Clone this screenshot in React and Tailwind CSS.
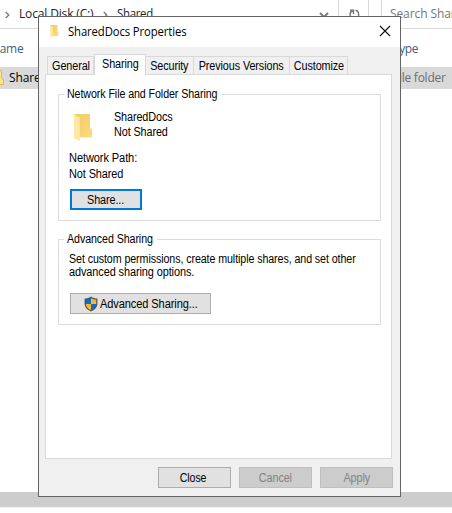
import React from "react";

const UI = "font-['Liberation_Sans',Arial,sans-serif] text-[12px] leading-[16px] whitespace-nowrap text-black";
const SEGOE = "font-['Open_Sans','Noto_Sans',sans-serif] text-[12px] leading-[16px] whitespace-nowrap";
const NARROW = "inline-block origin-left scale-x-[0.9] tracking-[-0.1px]";
const NARROWER = "inline-block origin-left scale-x-[0.89] tracking-[-0.1px]";
const NARROW_CENTER = "inline-block origin-center scale-x-[0.9] tracking-[-0.1px]";

function Chevron({ className }) {
  return (
    <svg className={className} width="5" height="8" viewBox="0 0 5 8" fill="none" stroke="#777" strokeWidth="1.3">
      <path d="M.8 1l3 3-3 3" />
    </svg>
  );
}

function Folder({ width, height }) {
  return (
    <svg width={width} height={height} viewBox="0 0 19 28" className="shrink-0">
      <defs>
        <linearGradient id="folder-back" x1="0" x2="1" y1="0" y2="1">
          <stop offset="0" stopColor="#efcb62" />
          <stop offset="1" stopColor="#fbdc82" />
        </linearGradient>
      </defs>
      <path d="M0 0H16V14.500H18V23.500H5Z" fill="url(#folder-back)" />
      <path d="M0 0L5.800 4V27L0 24.500Z" fill="#ffe8a2" />
    </svg>
  );
}

function Shield() {
  return (
    <svg width="14" height="16" viewBox="0 0 14 16" className="shrink-0">
      <path d="M7 .5C5.200 2 3 2.600 .6 2.600V7.500C.6 11.200 3.200 13.900 7 15.500c3.800-1.600 6.400-4.300 6.400-8V2.600C11 2.600 8.800 2 7 .5Z" fill="#505050" />
      <path d="M7 2C5.500 3 3.700 3.600 1.800 3.700V8H7Z" fill="#0870d0" />
      <path d="M7 2c1.500 1 3.300 1.600 5.200 1.700V8H7Z" fill="#fdb52b" />
      <path d="M1.800 8C2 10.900 4 12.900 7 14.300V8Z" fill="#fdb52b" />
      <path d="M12.200 8C12 10.900 10 12.900 7 14.300V8Z" fill="#0870d0" />
    </svg>
  );
}

function Tab({ className, children }) {
  return (
    <div className={`${UI} flex h-[18px] justify-center border-t border-r border-[#d9d9d9] bg-[#f0f0f0] pt-px ${className}`}>
      <span className={NARROW_CENTER}>{children}</span>
    </div>
  );
}

function Group({ title, titleClass, className, children }) {
  return (
    <fieldset className={`ml-3 w-[323px] min-w-0 border border-[#dcdcdc] ${className}`}>
      <legend className={`${UI} ml-[5px] h-4 pl-[3px] ${titleClass}`}>
        <span className={NARROWER}>{title}</span>
      </legend>
      {children}
    </fieldset>
  );
}

function Explorer() {
  return (
    <div className="flex h-[513px] w-[452px] flex-col bg-white">
      <div className="flex h-[29px]">
        <div className="flex w-[338px] border-b border-[#d9d9d9] pt-[6px]">
          <Chevron className="mt-[5px] ml-[5px]" />
          <span className={`${SEGOE} ml-[9px] w-[76px] tracking-[-0.15px] text-[#222]`}>Local Disk (C:)</span>
          <Chevron className="mt-[5px] ml-[8px]" />
          <span className={`${SEGOE} ml-[9px] origin-left scale-x-[0.95] tracking-[-0.3px] text-[#222]`}>Shared</span>
          <svg className="mt-[6px] ml-auto mr-[9px]" width="10" height="8" viewBox="0 0 10 8" fill="none" stroke="#777" strokeWidth="1.800">
            <path d="M1 1l4 4 4-4" />
          </svg>
        </div>
        <div className="w-[31px] border-x border-b border-[#d9d9d9] pt-[9px] pl-[10px]">
          <svg width="11" height="11" viewBox="0 0 11 11" fill="none" stroke="#777" strokeWidth="1.400">
            <path d="M1 1.200H4.500V5M4.200 1.500C1.500 2.500.6 5 1.500 7.500M6.500 1.200C9 1.700 10 4 9.500 7.500" />
          </svg>
        </div>
        <div className="w-3" />
        <div className="flex flex-1 overflow-hidden border-b border-l border-[#d9d9d9] pt-[6px] pl-2">
          <span className={`${SEGOE} tracking-[-0.1px] text-[#777]`}>Search Shared</span>
        </div>
      </div>
      <div className="flex h-[38px] overflow-hidden pt-[12px]">
        <span className={`${SEGOE} -ml-[9px] w-[402px] tracking-[-0.3px] text-[#44607e]`}>Name</span>
        <span className={`${SEGOE} tracking-[-0.4px] text-[#44607e]`}>Type</span>
      </div>
      <div className="flex h-[22px] overflow-hidden bg-[#d9d9d9] pt-[3px]">
        <svg width="5" height="16" viewBox="0 0 5 16"><path d="M-1 .5H1.500V8.500L3.500 9.500V14.500H-1Z" fill="#ffe391" stroke="#e9b83c" /></svg>
        <span className={`${SEGOE} ml-[4px] w-[384px] tracking-[-0.1px] text-black`}>SharedDocs</span>
        <span className={`${SEGOE} tracking-[-0.25px] text-[#6d6d6d]`}>File folder</span>
      </div>
      <div className="flex-1" />
      <div className="h-[15px] bg-[#cdcdcd]" />
      <div className="h-px bg-[#f0f0f0]" />
      <div className="h-[5px] bg-white" />
    </div>
  );
}

function Dialog() {
  return (
    <div className="absolute top-[16px] left-[38px] flex h-[481px] w-[363px] flex-col border border-[#646464] bg-[#f0f0f0]">
      <div className="flex h-[30px] shrink-0 bg-white pt-[7px] pl-[11px]">
        <div className="pt-px"><Folder width={9} height={13} /></div>
        <span className={`${SEGOE} ml-[9px] origin-left scale-x-[0.94] tracking-[-0.1px] text-black`}>SharedDocs Properties</span>
        <svg className="ml-auto mr-[9px] mt-px" width="12" height="12" viewBox="0 0 12 12" stroke="#111" strokeWidth="1.100">
          <path d="M1 1l10 10M11 1L1 11" />
        </svg>
      </div>
      <div className="flex h-[27px] shrink-0 items-end pl-[8px]">
        <Tab className="w-[47px] border-l">General</Tab>
        <div className={`${UI} z-10 -mb-px flex h-[21px] w-[52px] justify-center border-x border-t border-[#d9d9d9] bg-white pt-px`}>
          <span className={NARROW_CENTER}>Sharing</span>
        </div>
        <Tab className="w-[48px]">Security</Tab>
        <Tab className="w-[96px]">Previous Versions</Tab>
        <Tab className="w-[58px]">Customize</Tab>
      </div>
      <div className="ml-[6px] h-[385px] w-[347px] shrink-0 border border-[#d9d9d9] bg-white pt-[11px]">
        <Group title="Network File and Folder Sharing" titleClass="w-[157px]" className="h-[135px]">
          <div className="flex h-[48px] pt-[7px] pl-[15px]">
            <div className="pt-[5px]"><Folder width={19} height={28} /></div>
            <div className={`${UI} ml-[21px]`}>
              <div className="h-[15px]"><span className={NARROW}>SharedDocs</span></div>
              <div><span className={NARROW}>Not Shared</span></div>
            </div>
          </div>
          <div className={`${UI} pl-[10px]`}><span className="inline-block origin-left scale-x-[0.92] tracking-[-0.1px]">Network Path:</span></div>
          <div className={`${UI} pl-[10px]`}><span className="inline-block origin-left scale-x-[0.91] tracking-[-0.1px]">Not Shared</span></div>
          <button className={`${UI} mt-[7px] ml-[11px] flex h-[21px] w-[72px] items-center justify-center border-2 border-[#0078d7] bg-[#e1e1e1]`}>
            <span className={NARROW_CENTER}>Share...</span>
          </button>
        </Group>
        <Group title="Advanced Sharing" titleClass="w-[93px]" className="mt-[10px] h-[94px]">
          <div className={`${UI} pt-[4px] pl-[10px]`}>
            <div className="h-[13px]"><span className={NARROWER}>Set custom permissions, create multiple shares, and set other</span></div>
            <div className="h-[13px]"><span className="inline-block origin-left scale-x-[0.91] tracking-[-0.1px]">advanced sharing options.</span></div>
          </div>
          <button className={`${UI} mt-[16px] ml-[11px] flex h-[21px] w-[141px] items-center border border-[#adadad] bg-[#e1e1e1] pl-[13px]`}>
            <Shield />
            <span className="ml-[2px] inline-block origin-left scale-x-[0.92] tracking-[-0.1px]">Advanced Sharing...</span>
          </button>
        </Group>
      </div>
      <div className="flex pt-[8px] pl-[119px]">
        <button className={`${UI} flex h-[21px] w-[73px] items-center justify-center border border-[#adadad] bg-[#e1e1e1]`}>
          <span className="-ml-[2px] inline-block origin-center scale-x-[0.88] tracking-[-0.1px]">Close</span>
        </button>
        <button className={`${UI} ml-[8px] flex h-[21px] w-[73px] items-center justify-center border border-[#bfbfbf] bg-[#cccccc]`}>
          <span className={`${NARROW_CENTER} text-[#838383]`}>Cancel</span>
        </button>
        <button className={`${UI} ml-[8px] flex h-[21px] w-[73px] items-center justify-center border border-[#bfbfbf] bg-[#cccccc]`}>
          <span className={`${NARROW_CENTER} text-[#838383]`}>Apply</span>
        </button>
      </div>
    </div>
  );
}

export default function App() {
  return (
    <main className="relative h-[513px] w-[452px] overflow-hidden bg-white">
      <Explorer />
      <Dialog />
    </main>
  );
}
